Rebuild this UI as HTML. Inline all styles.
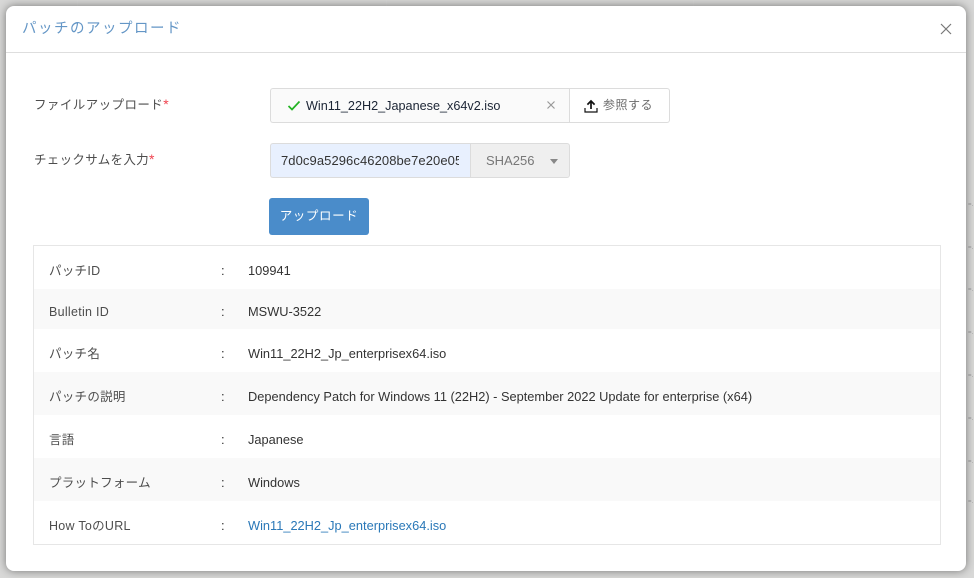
<!DOCTYPE html>
<html lang="ja"><head><meta charset="utf-8"><style>
html,body{margin:0;padding:0}
body{width:974px;height:578px;position:relative;overflow:hidden;background:#d8d8d7;font-family:"Liberation Sans","Noto Sans CJK JP",sans-serif;font-size:13px;color:#333}
.a{position:absolute;white-space:nowrap}
.m{position:absolute;left:6px;top:6px;width:960px;height:565px;background:#fff;border-radius:8px;box-shadow:0 0 9px rgba(0,0,0,.45)}
.g{position:absolute;background:#dadad9}
.r{position:absolute;left:34px;width:906px;background:#f9f9f9}
.k{position:absolute;left:49px;white-space:nowrap;color:#4d4d4d;font-size:12.5px;line-height:18px;letter-spacing:.28px}
.c{position:absolute;left:221px;line-height:18px;color:#333}
.v{position:absolute;left:248px;white-space:nowrap;line-height:18px;color:#333;font-size:12.8px}
.s{color:#f0434f;font-size:14px;line-height:10px;margin-left:0;letter-spacing:0}
.b{position:absolute;left:968px;width:6px;height:5px;font-size:6px;line-height:5px;color:#999;overflow:hidden}
</style></head><body>
<div class="g" style="left:77px;top:0;width:1px;height:6px"></div>
<div class="g" style="left:386px;top:0;width:1px;height:6px"></div>
<div class="g" style="left:693px;top:0;width:1px;height:6px"></div>
<div class="b" style="top:203px">=.</div>
<div class="b" style="top:246px">=.</div>
<div class="b" style="top:288px">=.</div>
<div class="b" style="top:331px">=.</div>
<div class="b" style="top:374px">=.</div>
<div class="b" style="top:417px">=.</div>
<div class="b" style="top:460px">=.</div>
<div class="b" style="top:500px">=.</div>
<div class="m"></div>
<div class="a" style="left:22px;top:19px;font-size:14.5px;line-height:20px;color:#6496c6;letter-spacing:1.5px">パッチのアップロード</div>
<div class="a" style="left:6px;top:52px;width:960px;height:1px;background:#dedede"></div>
<svg class="a" style="left:939px;top:22px" width="14" height="14" viewBox="0 0 14 14"><path d="M2 2L12 12M12 2L2 12" stroke="#777" stroke-width="1.2" fill="none"/></svg>

<div class="a" style="left:34px;top:96px;line-height:18px;font-size:12.5px;color:#4d4d4d;letter-spacing:.42px">ファイルアップロード<span class="s">*</span></div>
<div class="a" style="left:270px;top:88px;width:299px;height:33px;border:1px solid #dcdcdc;border-right:0;border-radius:3px 0 0 3px;background:#fafafa"></div>
<div class="a" style="left:569px;top:88px;width:101px;height:35px;box-sizing:border-box;border:1px solid #dcdcdc;border-radius:0 3px 3px 0;background:#fff"></div>
<svg class="a" style="left:287px;top:99px" width="14" height="13" viewBox="0 0 14 13"><path d="M1.5 7L5 10.5L12.5 2.5" stroke="#22b322" stroke-width="1.7" fill="none"/></svg>
<div class="a" style="left:306px;top:97px;line-height:18px;color:#1c2535;font-size:12.65px">Win11_22H2_Japanese_x64v2.iso</div>
<svg class="a" style="left:546px;top:100px" width="10" height="10" viewBox="0 0 10 10"><path d="M1.5 1.5L8.5 8.5M8.5 1.5L1.5 8.5" stroke="#999" stroke-width="1.2" fill="none"/></svg>
<svg class="a" style="left:584px;top:99px" width="14" height="14" viewBox="0 0 14 14"><path d="M7 10V2.2M3.4 5.6L7 2L10.6 5.6" stroke="#111" stroke-width="1.7" fill="none"/><path d="M1 9V13H13V9" stroke="#111" stroke-width="1.2" fill="none"/></svg>
<div class="a" style="left:603px;top:96px;line-height:18px;font-size:12px;color:#6a6a6a;letter-spacing:.5px">参照する</div>

<div class="a" style="left:34px;top:151px;line-height:18px;font-size:12.5px;color:#4d4d4d;letter-spacing:.3px">チェックサムを入力<span class="s">*</span></div>
<div class="a" style="left:270px;top:143px;width:200px;height:33px;border:1px solid #dcdcdc;border-right:0;border-radius:3px 0 0 3px;background:#e8f0fe"></div>
<div class="a" style="left:281px;top:152px;width:178px;overflow:hidden;line-height:18px;color:#333;font-size:13px;letter-spacing:.08px">7d0c9a5296c46208be7e20e05f</div>
<div class="a" style="left:470px;top:143px;width:100px;height:35px;box-sizing:border-box;border:1px solid #dcdcdc;border-radius:0 3px 3px 0;background:#efefef"></div>
<div class="a" style="left:486px;top:152px;line-height:18px;color:#777;font-size:13px">SHA256</div>
<div class="a" style="left:550px;top:159px;width:0;height:0;border-left:4px solid transparent;border-right:4px solid transparent;border-top:5px solid #888"></div>

<div class="a" style="left:269px;top:198px;width:100px;height:37px;background:#4a8cca;border-radius:3px;color:#fff;font-size:12.5px;line-height:37px;text-align:center;letter-spacing:.6px">アップロード</div>

<div class="a" style="left:33px;top:245px;width:906px;height:298px;border:1px solid #e6e6e6"></div>
<div class="r" style="top:289px;height:40px"></div>
<div class="r" style="top:372px;height:43px"></div>
<div class="r" style="top:458px;height:43px"></div>

<div class="k" style="top:262px">パッチID</div><div class="c" style="top:262px">:</div><div class="v" style="top:262px">109941</div>
<div class="k" style="top:303px">Bulletin ID</div><div class="c" style="top:303px">:</div><div class="v" style="top:303px">MSWU-3522</div>
<div class="k" style="top:345px">パッチ名</div><div class="c" style="top:345px">:</div><div class="v" style="top:345px">Win11_22H2_Jp_enterprisex64.iso</div>
<div class="k" style="top:388px">パッチの説明</div><div class="c" style="top:388px">:</div><div class="v" style="top:388px">Dependency Patch for Windows 11 (22H2) - September 2022 Update for enterprise (x64)</div>
<div class="k" style="top:431px">言語</div><div class="c" style="top:431px">:</div><div class="v" style="top:431px">Japanese</div>
<div class="k" style="top:474px">プラットフォーム</div><div class="c" style="top:474px">:</div><div class="v" style="top:474px">Windows</div>
<div class="k" style="top:517px">How ToのURL</div><div class="c" style="top:517px">:</div><div class="v" style="top:517px;color:#2a78b8">Win11_22H2_Jp_enterprisex64.iso</div>
</body></html>
